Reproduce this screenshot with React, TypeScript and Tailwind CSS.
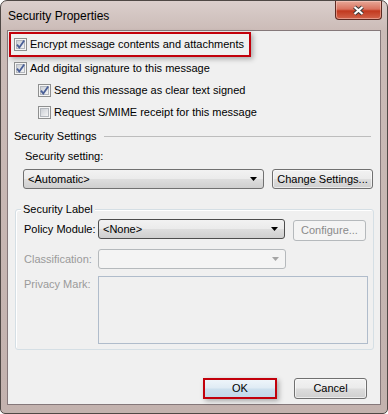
import React from 'react'

const btnBg =
  'bg-[linear-gradient(to_bottom,#f2f2f2_0%,#ebebeb_48%,#dddddd_52%,#cfcfcf_100%)]'

function CheckBox({ checked }: { checked: boolean }) {
  return (
    <svg width="13" height="13" viewBox="0 0 13 13" className="shrink-0">
      <defs>
        <linearGradient id="cbInner" x1="0" y1="0" x2="1" y2="1">
          <stop offset="0" stopColor="#c9cdd3" />
          <stop offset="1" stopColor="#f6f6f6" />
        </linearGradient>
      </defs>
      <rect x="0.5" y="0.5" width="12" height="12" fill="#f5f5f5" stroke="#8e8f8f" />
      <rect x="2.5" y="2.5" width="8" height="8" fill="url(#cbInner)" stroke="#b3b7bd" />
      {checked && (
        <path d="M3 6.6 L5.3 9.6 L10.2 2.6" fill="none" stroke="#4a5f97" strokeWidth="1.8" />
      )}
    </svg>
  )
}

function Arrow({ color }: { color: string }) {
  return (
    <svg width="7" height="4" viewBox="0 0 7 4" className="shrink-0">
      <path d="M0 0 H7 L3.5 4 Z" fill={color} />
    </svg>
  )
}

function Check({ checked, label }: { checked: boolean; label: string }) {
  return (
    <div className="flex items-center gap-[3px]">
      <CheckBox checked={checked} />
      <span className="leading-none">{label}</span>
    </div>
  )
}

export default function App() {
  return (
    <div className="h-[414px] w-[388px] bg-white font-['Liberation_Sans',Arial,sans-serif] text-[11px] text-black">
      <div className="flex h-[414px] w-[388px] flex-col rounded-t-[7px] rounded-b-[5px] border border-[#4f4845] bg-[linear-gradient(to_bottom,#dbcfcc_0px,#cbbbb7_30px,#c3b2ae_100%)]">
        {/* Title bar */}
        <div className="flex h-[29px] justify-between">
          <div className="pl-[7px] pt-[9px] text-[12px] leading-none">Security Properties</div>
          <div className="mr-[5px] flex h-[19px] w-[47px] items-center justify-center rounded-b-[4px] border border-t-0 border-[#5e2a22] bg-[linear-gradient(to_bottom,#e7a898_0%,#d9735f_45%,#c2391f_55%,#d2644b_100%)] shadow-[inset_0_0_0_1px_rgba(255,220,210,0.45)]">
            <svg width="13" height="11" viewBox="0 0 13 11">
              <path d="M2.5 2 L10.5 9 M10.5 2 L2.5 9" stroke="#3a3a3a" strokeWidth="4.2" />
              <path d="M2.5 2 L10.5 9 M10.5 2 L2.5 9" stroke="#ffffff" strokeWidth="2.2" />
            </svg>
          </div>
        </div>

        {/* Client area */}
        <div className="mx-[6px] flex h-[375px] flex-col border border-[#85787a] bg-[#f0f0f0]">
          <div className="ml-[1px] mt-[1px] flex h-[25px] w-[242px] items-center border-2 border-[#c2000b] pl-[3px] shadow-[2px_2px_5px_rgba(0,0,0,0.3)]">
            <Check checked label="Encrypt message contents and attachments" />
          </div>
          <div className="flex h-[22px] items-center pl-[6px]">
            <Check checked label="Add digital signature to this message" />
          </div>
          <div className="flex h-[22px] items-center pl-[30px]">
            <Check checked label="Send this message as clear text signed" />
          </div>
          <div className="flex h-[22px] items-center pl-[30px]">
            <Check checked={false} label="Request S/MIME receipt for this message" />
          </div>

          {/* Security Settings */}
          <div className="mt-[3px] flex h-[20px] items-center pl-[6px]">
            <span className="leading-none">Security Settings</span>
            <div className="ml-[7px] mr-[9px] h-px flex-1 bg-[#bdbdbd]" />
          </div>
          <div className="flex h-[20px] items-center pl-[17px]">
            <span className="leading-none">Security setting:</span>
          </div>
          <div className="mt-[3px] flex items-center gap-[8px] pl-[15px]">
            <div className={`flex h-[20px] w-[241px] items-center justify-between rounded-[3px] border border-[#707070] ${btnBg} pl-[4px] pr-[6px]`}>
              <span className="leading-none">{'<Automatic>'}</span>
              <Arrow color="#000" />
            </div>
            <button type="button" className={`flex h-[20px] w-[101px] items-center justify-center rounded-[3px] border border-[#707070] ${btnBg} leading-none shadow-[inset_0_0_0_1px_rgba(255,255,255,0.6)]`}>
              Change Settings...
            </button>
          </div>

          {/* Security Label group */}
          <div className="relative ml-[7px] mt-[20px] h-[141px] w-[359px] rounded-[3px] border border-[#d5dfe5] shadow-[inset_1px_1px_0_#ffffff]">
            <span className="absolute left-[5px] top-[-7px] bg-[#f0f0f0] px-[2px] leading-[13px]">Security Label</span>
            <div className="flex flex-col pl-[8px] pt-[9px]">
              <div className="flex items-start">
                <span className="flex h-[20px] w-[74px] items-center leading-none">Policy Module:</span>
                <div className={`flex h-[20px] w-[187px] items-center justify-between rounded-[3px] border border-[#4d4d4d] ${btnBg} pl-[4px] pr-[6px]`}>
                  <span className="leading-none">{'<None>'}</span>
                  <Arrow color="#000" />
                </div>
                <button type="button" className="ml-[8px] mt-[1px] flex h-[21px] w-[73px] items-center justify-center rounded-[3px] border border-[#b5b9bc] bg-[#f4f4f4] leading-none text-[#8a8a8a]">
                  Configure...
                </button>
              </div>
              <div className="mt-[8px] flex items-center">
                <span className="w-[74px] leading-none text-[#9a9a9a]">Classification:</span>
                <div className="flex h-[20px] w-[188px] items-center justify-end rounded-[3px] border border-[#b5b9bc] bg-[#f4f4f4] pr-[6px]">
                  <Arrow color="#a5a5a5" />
                </div>
              </div>
              <div className="mt-[7px] flex items-start">
                <span className="w-[74px] pt-[3px] leading-none text-[#9a9a9a]">Privacy Mark:</span>
                <div className="h-[68px] w-[270px] border border-[#b0bccb] bg-[#f0f0f0]" />
              </div>
            </div>
          </div>

          {/* Buttons */}
          <div className="mt-[28px] flex justify-end gap-[17px] pr-[13px]">
            <div className="h-[21px] w-[74px] border-2 border-[#c2000b] shadow-[2px_2px_5px_rgba(0,0,0,0.3)]">
              <button type="button" className="flex h-full w-full items-center justify-center bg-[linear-gradient(to_bottom,#eef5fa_0%,#dfebf4_48%,#cde0ee_52%,#c2d8e8_100%)] leading-none">
                OK
              </button>
            </div>
            <button type="button" className={`flex h-[21px] w-[73px] items-center justify-center rounded-[3px] border border-[#707070] ${btnBg} leading-none shadow-[inset_0_0_0_1px_rgba(255,255,255,0.6)]`}>
              Cancel
            </button>
          </div>
        </div>
      </div>
    </div>
  )
}
